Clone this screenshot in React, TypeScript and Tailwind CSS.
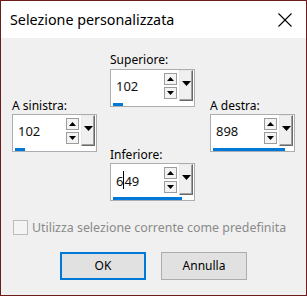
import React from "react";

const font = { fontFamily: '"Noto Sans", "Open Sans", sans-serif' };

function Up() {
  return (
    <svg width="7" height="4" viewBox="0 0 7 4" className="block">
      <polygon points="0,4 7,4 3.5,0" fill="#000" />
    </svg>
  );
}
function Down({ w = 7, h = 4 }: { w?: number; h?: number }) {
  return (
    <svg width={w} height={h} viewBox={`0 0 ${w} ${h}`} className="block">
      <polygon points={`0,0 ${w},0 ${w / 2},${h}`} fill="#000" />
    </svg>
  );
}

function Field({ value, bar, caret }: { value: string; bar: number; caret?: boolean }) {
  return (
    <div className="w-[85px] h-[38px] border border-[#abadb3] bg-white flex flex-col">
      <div className="flex h-[31px]">
        <div className="flex-1 pl-[5px] pt-[8px] text-[13px] leading-[16px] text-[#101010] flex items-start">
          {caret ? (
            <span className="flex items-center">
              <span>6</span>
              <span className="w-px h-[18px] bg-black -mt-[1px]" />
              <span>49</span>
            </span>
          ) : (
            value
          )}
        </div>
        <div className="flex flex-col gap-[2px] pt-[3px] w-[13px]">
          <div className="h-[12px] w-[13px] border border-[#9c9c9c] bg-[#f3f3f3] flex items-center justify-center">
            <Up />
          </div>
          <div className="h-[12px] w-[13px] border border-[#9c9c9c] bg-[#f3f3f3] flex items-center justify-center">
            <Down />
          </div>
        </div>
        <div className="ml-[2px] mr-[1px] w-[14px] h-[31px] bg-[#f0f0f0] border-t border-l border-t-[#e8e8e8] border-l-[#e8e8e8] border-r border-b border-r-[#696969] border-b-[#696969] shadow-[inset_-1px_-1px_0_#a0a0a0] flex justify-center pt-[10px]">
          <Down w={9} h={5} />
        </div>
      </div>
      <div className="mt-[2px] ml-[2px] h-[3px] bg-[#0078d7]" style={{ width: bar }} />
    </div>
  );
}

function Label({ text }: { text: string }) {
  return <div className="h-[16px] text-[12px] leading-[16px] text-black">{text}</div>;
}

export default function App() {
  return (
    <div
      className="w-[307px] h-[296px] border border-[#6e1b1b] bg-[#f0f0f0] flex flex-col overflow-hidden"
      style={font}
    >
      <div className="h-[37px] bg-white flex items-center justify-between pl-[9px] pr-[14px] shrink-0">
        <span className="text-[14.3px] text-black leading-[20px]">Selezione personalizzata</span>
        <svg width="14" height="14" viewBox="0 0 14 14">
          <line x1="0.5" y1="0.5" x2="13.5" y2="13.5" stroke="#000" strokeWidth="1.1" />
          <line x1="13.5" y1="0.5" x2="0.5" y2="13.5" stroke="#000" strokeWidth="1.1" />
        </svg>
      </div>
      <div className="flex items-start pt-[14px] pl-[11px]">
        <div className="mt-[46px] w-[85px]">
          <Label text="A sinistra:" />
          <Field value="102" bar={10} />
        </div>
        <div className="ml-[13px] w-[85px]">
          <div className="h-[17px] text-[12px] leading-[16px] text-black">Superiore:</div>
          <Field value="102" bar={10} />
          <div className="mt-[40px]">
            <Label text="Inferiore:" />
            <Field value="649" bar={69} caret />
          </div>
        </div>
        <div className="ml-[15px] mt-[46px] w-[85px]">
          <Label text="A destra:" />
          <Field value="898" bar={72} />
        </div>
      </div>
      <div className="mt-[19px] pl-[12px] flex items-center gap-[4px]">
        <div className="w-[15px] h-[15px] border border-[#bcbcbc] bg-[#f4f4f4]" />
        <span className="text-[12.4px] leading-[15px] text-[#8a8a8a]">
          Utilizza selezione corrente come predefinita
        </span>
      </div>
      <div className="mt-[17px] pl-[59px] flex gap-[15px]">
        <div className="w-[86px] h-[28px] border-2 border-[#0078d7] bg-[#e1e1e1] flex items-center justify-center text-[12px] text-black">
          OK
        </div>
        <div className="w-[86px] h-[28px] border border-[#adadad] bg-[#e1e1e1] flex items-center justify-center text-[12px] text-black">
          Annulla
        </div>
      </div>
    </div>
  );
}
